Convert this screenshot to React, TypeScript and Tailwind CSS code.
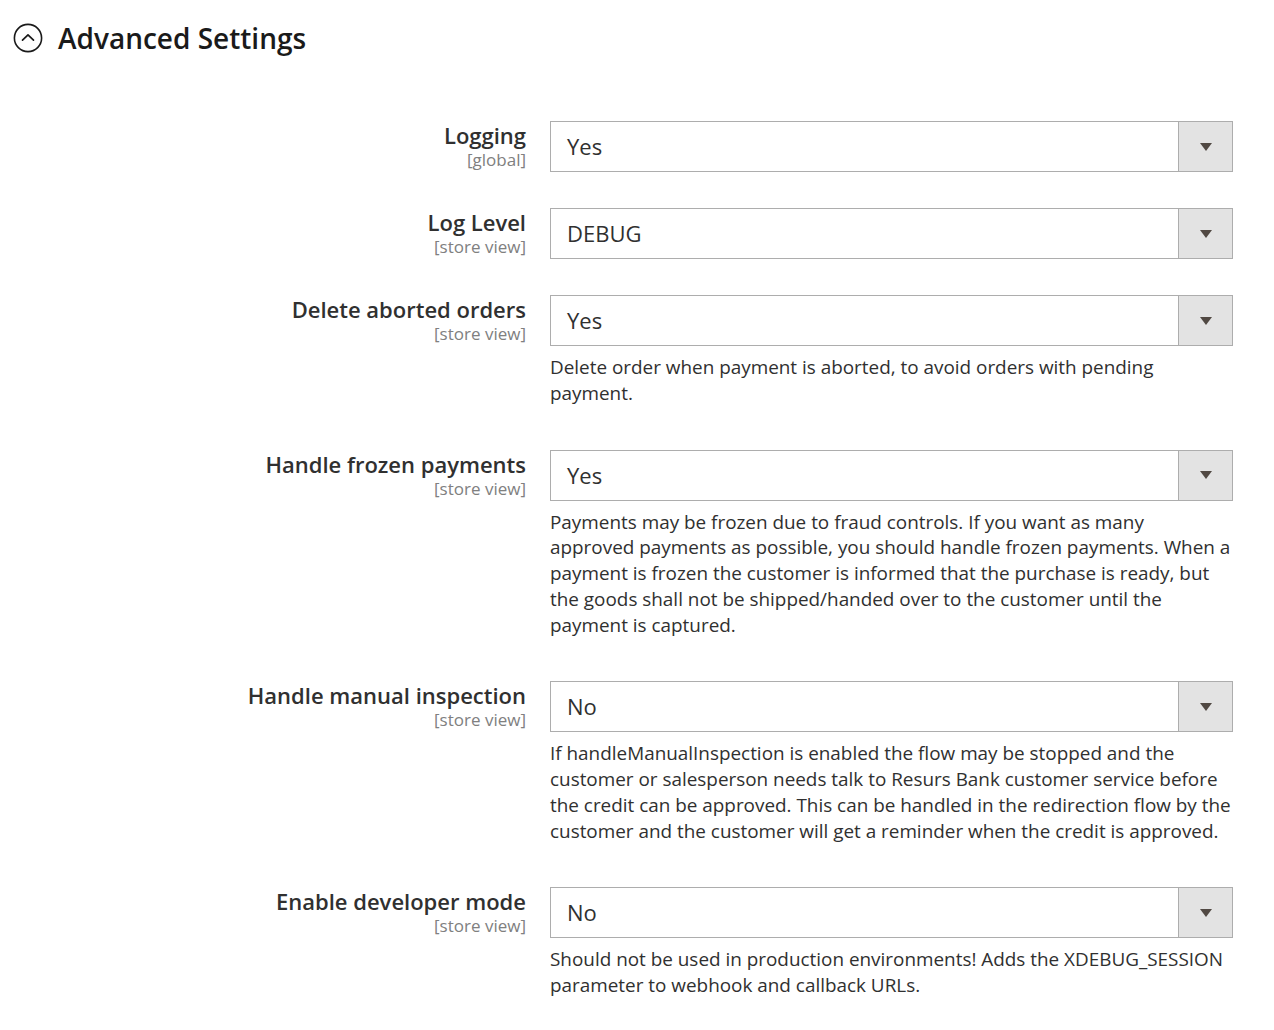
import React from "react";

type Row = {
  label: string;
  scope: string;
  value: string;
  note?: string[];
};

// Note lines are split the way the admin page wraps them.
const ROWS: Row[] = [
  { label: "Logging", scope: "[global]", value: "Yes" },
  { label: "Log Level", scope: "[store view]", value: "DEBUG" },
  {
    label: "Delete aborted orders",
    scope: "[store view]",
    value: "Yes",
    note: ["Delete order when payment is aborted, to avoid orders with pending", "payment."],
  },
  {
    label: "Handle frozen payments",
    scope: "[store view]",
    value: "Yes",
    note: [
      "Payments may be frozen due to fraud controls. If you want as many",
      "approved payments as possible, you should handle frozen payments. When a",
      "payment is frozen the customer is informed that the purchase is ready, but",
      "the goods shall not be shipped/handed over to the customer until the",
      "payment is captured.",
    ],
  },
  {
    label: "Handle manual inspection",
    scope: "[store view]",
    value: "No",
    note: [
      "If handleManualInspection is enabled the flow may be stopped and the",
      "customer or salesperson needs talk to Resurs Bank customer service before",
      "the credit can be approved. This can be handled in the redirection flow by the",
      "customer and the customer will get a reminder when the credit is approved.",
    ],
  },
  {
    label: "Enable developer mode",
    scope: "[store view]",
    value: "No",
    note: [
      "Should not be used in production environments! Adds the XDEBUG_SESSION",
      "parameter to webhook and callback URLs.",
    ],
  },
];

function CollapseIcon() {
  return (
    <svg width="30" height="30" viewBox="0 0 30 30" fill="none" className="shrink-0">
      <circle cx="15" cy="15" r="13.6" stroke="#1a1a1a" strokeWidth="1.6" />
      <path d="M9.5 17.2 L15 11.8 L20.5 17.2" stroke="#1a1a1a" strokeWidth="1.7" strokeLinecap="round" strokeLinejoin="round" />
    </svg>
  );
}

function SelectField({ value }: { value: string }) {
  return (
    <div className="flex h-[51px] w-full border border-[#adadad] bg-white">
      <div className="flex flex-1 items-center pl-4 text-[22px] text-[#303030]">{value}</div>
      <div className="flex w-[54px] items-center justify-center border-l border-[#adadad] bg-[#e3e3e3]">
        <svg width="12" height="8" viewBox="0 0 12 8">
          <path d="M0 0 H12 L6 8 Z" fill="#514943" />
        </svg>
      </div>
    </div>
  );
}

export default function App() {
  return (
    <div className="min-h-screen w-[1274px] bg-white text-[#303030]" style={{ fontFamily: '"Open Sans", "Liberation Sans", sans-serif' }}>
      <div className="flex items-center gap-[15px] pl-[13px] pt-[19px]">
        <CollapseIcon />
        <h2 className="text-[28px] font-semibold leading-[38px] text-[#1a1a1a]">Advanced Settings</h2>
      </div>

      <div className="mt-[64px] flex flex-col">
        {ROWS.map((row) => (
          <div key={row.label} className={row.note ? "mb-[7px] grid grid-cols-[526px_683px] gap-x-6" : "mb-9 grid grid-cols-[526px_683px] gap-x-6"}>
            <div className="flex flex-col items-end pt-[1px] text-right">
              <span className="text-[22px] font-semibold leading-[26px]">{row.label}</span>
              <span className="mt-[1px] text-[17px] leading-[21px] text-[#808080]">{row.scope}</span>
            </div>
            <div>
              <SelectField value={row.value} />
              {row.note ? (
                <div className="mb-9 mt-[9px] text-[18.9px] leading-[25.75px] text-[#303030]">
                  {row.note.map((line) => (
                    <div key={line} className="whitespace-nowrap">
                      {line}
                    </div>
                  ))}
                </div>
              ) : null}
            </div>
          </div>
        ))}
      </div>
    </div>
  );
}
